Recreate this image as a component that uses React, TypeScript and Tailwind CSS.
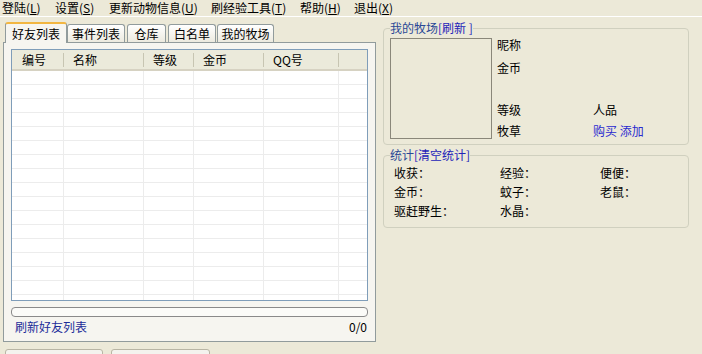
const menus = [
  { label: "登陆", key: "L", w: "w-[53px]" },
  { label: "设置", key: "S", w: "w-[54px]" },
  { label: "更新动物信息", key: "U", w: "w-[102px]" },
  { label: "刷经验工具", key: "T", w: "w-[89px]" },
  { label: "帮助", key: "H", w: "w-[54px]" },
  { label: "退出", key: "X", w: "w-[54px]" },
];

const tabs = [
  { label: "事件列表", cls: "w-[58px]" },
  { label: "仓库", cls: "ml-[2px] w-[39px]" },
  { label: "白名单", cls: "ml-[2px] w-[48px]" },
  { label: "我的牧场", cls: "ml-[1px] w-[57px]" },
];

const columns = [
  { label: "编号", w: "w-[52px]", pad: "pl-[10px]" },
  { label: "名称", w: "w-[80px]", pad: "pl-[9px]" },
  { label: "等级", w: "w-[50px]", pad: "pl-[9px]" },
  { label: "金币", w: "w-[70px]", pad: "pl-[9px]" },
  { label: "QQ号", w: "w-[75px]", pad: "pl-[9px]" },
];

const stats = [
  ["收获：", "经验：", "便便："],
  ["金币：", "蚊子：", "老鼠："],
  ["驱赶野生：", "水晶：", ""],
];

function FriendTable() {
  const rows = Array.from({ length: 17 }, (_, i) => i);
  return (
    <div className="h-[252px] overflow-hidden border border-[#7f9db9] bg-white">
      <div className="flex h-[21px] border-b-2 border-b-[#d6d2c2] bg-[#ebeadb]">
        {columns.map((c) => (
          <div key={c.label} className={`${c.w} ${c.pad} relative flex items-center`}>
            {c.label}
            <span className="absolute right-0 top-[3px] h-[14px] border-r border-[#c7c5b2]" />
          </div>
        ))}
        <div className="flex-1" />
      </div>
      {rows.map((r) => (
        <div key={r} className="flex h-[14px] border-b border-[#ececec]">
          {columns.map((c) => (
            <div key={c.label} className={`${c.w} border-r border-[#ececec]`} />
          ))}
          <div className="flex-1" />
        </div>
      ))}
    </div>
  );
}

export default function App() {
  return (
    <div className="h-[354px] w-[702px] overflow-hidden bg-[#ece9d8] font-['Noto_Sans_CJK_SC',sans-serif] text-[12px] leading-[14px] text-black">
      {/* menu */}
      <div className="flex h-[17px] items-center border-b border-white pl-[2px]">
        {menus.map((m) => (
          <div key={m.key} className={`${m.w} whitespace-nowrap`}>
            {m.label}(<span className="underline">{m.key}</span>)
          </div>
        ))}
      </div>

      <div className="flex">
        {/* left: tabs */}
        <div className="ml-[3px] w-[373px] pt-[5px]">
          <div className="flex h-[20px] items-end pl-[2px]">
            <div className="relative z-10 -mb-px flex h-[21px] w-[62px] items-center justify-center rounded-t-[3px] border-x border-t-2 border-x-[#919b9c] border-t-[#f2b641] bg-[#f6f5f0]">
              好友列表
            </div>
            {tabs.map((t) => (
              <div
                key={t.label}
                className={`${t.cls} flex h-[18px] items-center justify-center rounded-t-[3px] border-x border-t border-[#919b9c] bg-gradient-to-b from-white to-[#eceadf]`}
              >
                {t.label}
              </div>
            ))}
          </div>
          <div className="flex h-[300px] flex-col border border-[#919b9c] bg-[#f6f5f0] px-[7px] pt-[6px]">
            <FriendTable />
            <div className="mt-[6px] h-[10px] rounded-[4px] border border-[#8a8a8a] bg-[#fbfbf8]" />
            <div className="mt-[3px] flex h-[14px] items-center justify-between">
              <span className="pl-[4px] text-[#1c2d99]">刷新好友列表</span>
              <span className="pr-[1px]">0/0</span>
            </div>
          </div>
          <div className="mt-[7px] flex gap-[8px] pl-[2px]">
            <div className="h-[20px] w-[98px] rounded-[3px] border border-[#b8b5a4] bg-[#f4f3ee]" />
            <div className="h-[20px] w-[99px] rounded-[3px] border border-[#b8b5a4] bg-[#f4f3ee]" />
          </div>
        </div>

        {/* right */}
        <div className="ml-[7px] w-[306px] pt-[4px]">
          <fieldset className="h-[124px] rounded-[4px] border border-[#d0d0bf] pb-[5px] pl-[6px]">
            <legend className="text-[#2a4896]">
              我的牧场<span className="text-[#2323b8]">[刷新 ]</span>
            </legend>
            <div className="mt-[3px] flex">
              <div className="h-[101px] w-[102px] border border-[#8a877a]" />
              <div className="ml-[5px] grid w-[170px] grid-cols-[96px_1fr]">
                <div className="h-[14px]">昵称</div>
                <div />
                <div className="mt-[8px] h-[14px]">金币</div>
                <div className="mt-[8px]" />
                <div className="mt-[26px] h-[14px]">等级</div>
                <div className="mt-[26px]">人品</div>
                <div className="mt-[6px] h-[14px]">牧草</div>
                <div className="mt-[6px] text-[#2a2ad0]">购买 添加</div>
              </div>
            </div>
          </fieldset>
          <fieldset className="mt-[3px] h-[80px] rounded-[4px] border border-[#d0d0bf] pl-[6px]">
            <legend className="text-[#2a4896]">
              统计<span className="text-[#2323b8]">[清空统计]</span>
            </legend>
            <div className="ml-[4px] mt-[4px] flex flex-col gap-[5px]">
              {stats.map((row, i) => (
                <div key={i} className="grid h-[14px] grid-cols-[106px_100px_1fr]">
                  {row.map((s, j) => (
                    <div key={j}>{s}</div>
                  ))}
                </div>
              ))}
            </div>
          </fieldset>
        </div>
      </div>
    </div>
  );
}
